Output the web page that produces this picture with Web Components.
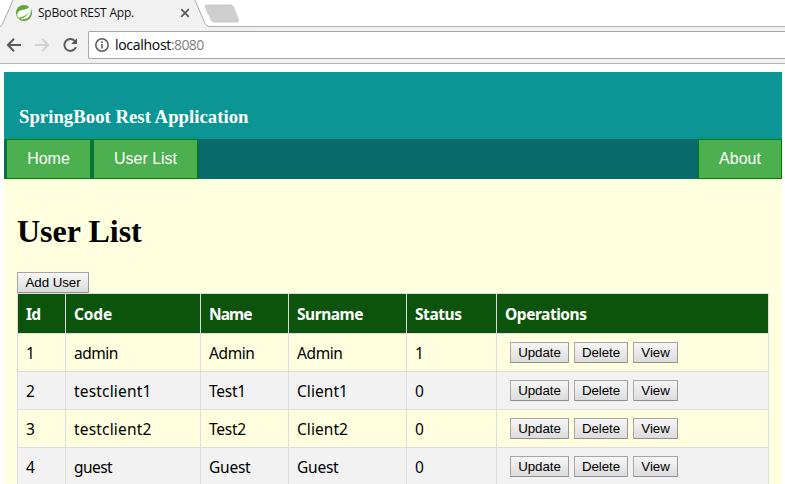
<!DOCTYPE html>
<html lang="en">
<head>
<meta charset="utf-8">
<title>SpBoot REST App.</title>
<style>
html,body{margin:0;height:484px;overflow:hidden;background:#fff}
body{display:flex;flex-direction:column}
</style>
</head>
<body>
<browser-chrome></browser-chrome>
<rest-page></rest-page>
<script>
const define = (name, markup, connected) => {
  const t = document.createElement('template');
  t.innerHTML = markup;
  customElements.define(name, class extends HTMLElement {
    constructor() {
      super();
      this.attachShadow({ mode: 'open' }).append(t.content.cloneNode(true));
    }
    connectedCallback() { if (connected) connected.call(this, this.shadowRoot); }
  });
};

/* Tracks its text out or in so that it advances exactly w pixels. */
define('fit-text', `<style>:host{display:inline-block;white-space:nowrap}span{display:inline-block}</style><span><slot></slot></span>`,
function (root) {
  const w = parseFloat(this.getAttribute('w')), n = this.textContent.length;
  if (!w) return;
  const s = root.querySelector('span');
  s.style.letterSpacing = ((w - s.getBoundingClientRect().width) / n) + 'px';
});

define('push-button', `<style>
:host{display:block;flex:none}
button{display:block;box-sizing:border-box;width:100%;height:21px;margin:0;padding:0;border:1px solid #a0a0a0;border-color:#a6a6a6 #999 #8f8f8f #a6a6a6;border-radius:1px;background:linear-gradient(#f6f6f6,#dcdcdc);font:13.333px/18px "Liberation Sans",Arial,sans-serif;letter-spacing:-.07px;color:#000;white-space:nowrap}
</style><button><slot></slot></button>`);

define('nav-button', `<style>
:host{display:block;box-sizing:border-box;height:40px;border:1px solid #008000;background:#4caf50;color:#fff;font:16px/37px "Liberation Sans",Arial,sans-serif;text-align:center;white-space:nowrap}
</style><slot></slot>`);

define('browser-tab', `<style>
:host{display:grid;width:260px;height:27px}
svg,.row{grid-area:1/1}
.row{display:flex;align-items:center;height:26px;padding-left:38px;font:12px/26px "Open Sans","Noto Sans",sans-serif;color:#111}
</style>
<svg width="260" height="27">
 <path d="M0 27 1.5 26 13 0H195L205.5 24Q206.500 26.500 209 26.500H260V27z" fill="#f1f1f1"/>
 <path d="M0 26.500Q1.500 26 2.500 24L13.500 -1M194.500 -1 205 23.500Q206.300 26.500 209 26.500H260" fill="none" stroke="#ababab"/>
 <path d="M206.500 5H230.500Q232.500 5 233.300 7L238.500 20Q239 22 237 22H214Q212 22 211.200 20L205.300 7Q204.500 5 206.500 5z" fill="#cfcfcf" stroke="#c0c0c0" stroke-width=".8"/>
 <circle cx="24" cy="13" r="8" fill="#60a637"/>
 <path d="M30 5.500C31.600 10.500 31 16 27 18.200C23.500 20 20 18.800 18.500 18.400C16 14.500 17.500 10.800 22 10C26 9.300 28.500 8.700 30 5.500z" fill="#fff"/>
 <path d="M18 17.500C22.500 17.700 27 15 28.500 11.500C27 16.800 23.500 18.700 19 18.800" fill="#60a637"/>
 <path d="M181.200 9.200 188.800 16.800M188.800 9.200 181.200 16.800" stroke="#5a5a5a" stroke-width="1.700"/>
</svg>
<div class="row"><fit-text w="96">SpBoot REST App.</fit-text></div>`);

define('browser-chrome', `<style>
:host{display:block;flex:none;height:64px;width:785px;overflow:hidden}
.strip{height:27px;background:linear-gradient(#b0b0b0,#b0b0b0) 0 26px/100% 1px no-repeat #fff}
.bar{display:flex;box-sizing:border-box;height:37px;background:#f1f1f1;border-bottom:1px solid #b5b5b5;padding-top:4px}
.nav{flex:none;width:88px;height:28px}
.url{flex:1;display:flex;align-items:center;box-sizing:border-box;height:28px;border:1px solid #a6a6a6;border-right:0;border-radius:2px 0 0 2px;background:#fff;font:14px/26px "Open Sans","Noto Sans",sans-serif;color:#000}
.url svg{flex:none;margin:0 5px 0 5px}
.port{color:#808080}
</style>
<div class="strip"><browser-tab></browser-tab></div>
<div class="bar">
 <svg class="nav" viewBox="0 31 88 28" fill="none" stroke-width="2">
  <path d="M21 45H8.500M14 38.800 7.900 45 14 51.200" stroke="#5a5a5a"/>
  <path d="M35 45H47.500M42 38.800 48.100 45 42 51.200" stroke="#d2d2d2"/>
  <path d="M75.200 41.300A6 6 0 1 0 76 47" stroke="#5a5a5a"/>
  <path d="M77 38.200V44H71.200z" fill="#5a5a5a"/>
 </svg>
 <div class="url">
  <svg width="16" height="16"><circle cx="8" cy="8" r="6.200" fill="none" stroke="#5a5a5a" stroke-width="1.500"/><path d="M8 4.300V6M8 7V11.500" stroke="#5a5a5a" stroke-width="1.600"/></svg>
  <fit-text w="56">localhost</fit-text><fit-text class="port" w="32.500">:8080</fit-text>
 </div>
</div>`);

define('user-table', `<style>
:host{display:block;width:752px;font:15.500px/20px "Noto Sans","Open Sans",sans-serif;color:#000}
.tr{display:grid;grid-template-columns:49px 135px 88px 118px 90px 272px;height:38px;box-sizing:border-box;border-bottom:1px solid #ddd}
.tr>div{box-sizing:border-box;border-right:1px solid #ddd;padding-left:8px;display:flex;align-items:center;gap:5px}
.tr>div:first-child{border-left:1px solid #ddd}
.tr:nth-child(odd){background:#f2f2f2}
.tr.head{height:41px;border-top:1px solid #ddd;background:#0c540c;color:#fff;font-weight:700}
.tr>.ops{padding-left:13px}
</style><div id="t"></div>`,
function (root) {
  const cell = ([s, w]) => `<div><fit-text w="${w}">${s}</fit-text></div>`;
  const head = [['Id',14.5],['Code',38],['Name',42.5],['Surname',66],['Status',46.5],['Operations',81.5]];
  const rows = [
    [['1',8.4],['admin',44],['Admin',45.5],['Admin',45.5],['1',8.4]],
    [['2',8.4],['testclient1',77.5],['Test1',37],['Client1',51],['0',8.4]],
    [['3',8.4],['testclient2',77.5],['Test2',37],['Client2',51],['0',8.4]],
    [['4',8.4],['guest',38],['Guest',41.5],['Guest',41.5],['0',8.4]]
  ];
  const ops = `<div class="ops"><push-button style="width:59px">Update</push-button><push-button style="width:54px">Delete</push-button><push-button style="width:45px">View</push-button></div>`;
  root.getElementById('t').innerHTML =
    `<div class="tr head">${head.map(cell).join('')}</div>` +
    rows.map(r => `<div class="tr">${r.map(cell).join('')}${ops}</div>`).join('');
});

define('rest-page', `<style>
:host{display:block;width:778px;margin:8px 0 0 4px;height:412px;overflow:hidden;background:#ffffdf;font-family:"Liberation Serif","Times New Roman",serif}
header{box-sizing:border-box;height:67px;background:#0b9595;color:#fff;padding:35px 0 0 15px;font-weight:700;font-size:18.720px;line-height:20px}
nav{display:flex;gap:2px;height:40px;padding-left:2px;background:#0a6a6a}
.end{margin-left:auto}
main{padding:0 13px}
h1{margin:0;padding-top:32px;height:61px;font-size:32px;line-height:40px}
</style>
<header><fit-text w="229.500">SpringBoot Rest Application</fit-text></header>
<nav><nav-button style="width:85px">Home</nav-button><nav-button style="width:105px">User List</nav-button><nav-button class="end" style="width:84px">About</nav-button></nav>
<main><h1>User List</h1><push-button style="width:72px">Add User</push-button><user-table></user-table></main>`);
</script>
</body>
</html>
